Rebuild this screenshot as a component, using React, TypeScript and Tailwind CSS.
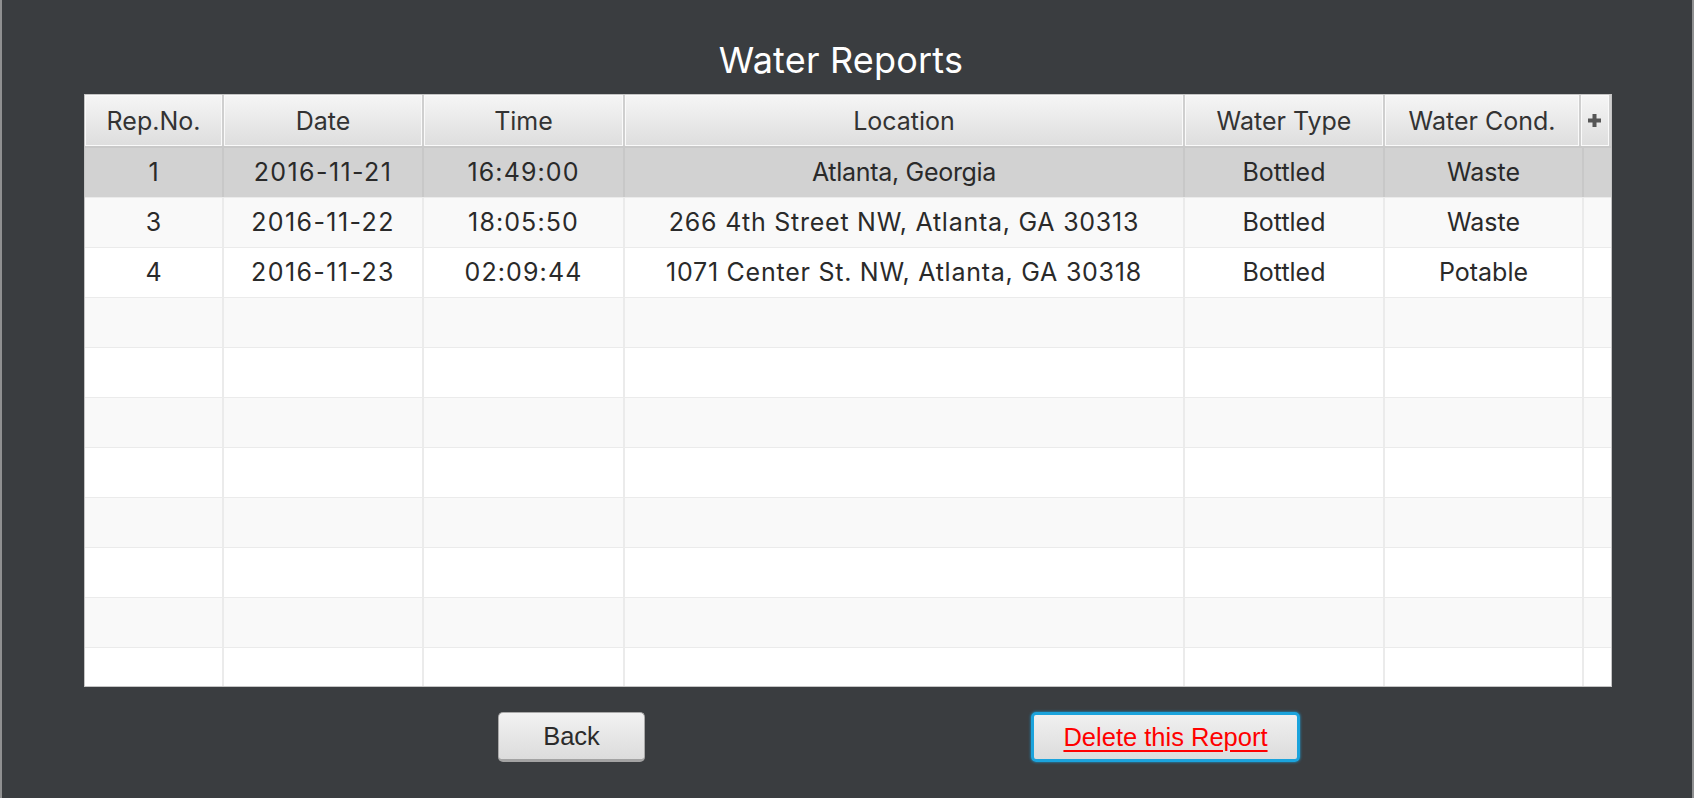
import React from "react";

const cols = [139, 200, 201, 560, 200, 199, 27];
const headerCols = [139, 200, 201, 560, 200, 196, 30];
const headers = ["Rep.No.", "Date", "Time", "Location", "Water Type", "Water Cond."];

type Cell = { t: string; c?: string };

const rows: Cell[][] = [
  [{ t: "1" }, { t: "2016-11-21", c: "tracking-[1.4px]" }, { t: "16:49:00", c: "tracking-[1.1px]" }, { t: "Atlanta, Georgia", c: "tracking-[-0.3px]" }, { t: "Bottled" }, { t: "Waste" }],
  [{ t: "3" }, { t: "2016-11-22", c: "tracking-[1.4px]" }, { t: "18:05:50", c: "tracking-[1.1px]" }, { t: "266 4th Street NW, Atlanta, GA 30313", c: "tracking-[0.75px]" }, { t: "Bottled" }, { t: "Waste" }],
  [{ t: "4" }, { t: "2016-11-23", c: "tracking-[1.4px]" }, { t: "02:09:44", c: "tracking-[1.1px]" }, { t: "1071 Center St. NW, Atlanta, GA 30318", c: "tracking-[0.75px]" }, { t: "Bottled" }, { t: "Potable" }],
];

export default function App() {
  const allRows: Cell[][] = [...rows];
  while (allRows.length < 11) allRows.push([{ t: "" }, { t: "" }, { t: "" }, { t: "" }, { t: "" }, { t: "" }]);
  return (
    <div
      className="w-[1694px] h-[798px] bg-[#3a3d40] overflow-hidden flex flex-col border-l-2 border-l-[#8f9091] border-r-2 border-r-[#8f9091]"
      style={{ fontFamily: "Inter, 'Noto Sans', sans-serif" }}
    >
      <div className="h-[94px] flex items-start justify-center pt-[42px] pr-[12px]">
        <span className="text-white text-[36px] leading-[36px] tracking-[0.2px]">Water Reports</span>
      </div>
      <div className="ml-[82px] w-[1528px] h-[593px] border border-[#c4c4c4] bg-white flex flex-col overflow-hidden">
        <div className="flex h-[53px] border-b-2 border-[#c9c9c9] bg-[#cfcfcf] gap-[2px] shrink-0">
          {headerCols.map((w, i) => (
            <div
              key={i}
              style={{ width: w - 2 }}
              className="h-full shrink-0 bg-gradient-to-b from-[#f5f5f5] to-[#dedede] border border-[#fafafa] flex items-center justify-center pt-[3px] text-[25px] text-[#333333]"
            >
              {i < 6 ? (
                headers[i]
              ) : (
                <svg width="13" height="13" viewBox="0 0 13 13" className="-mt-[4px] -ml-[2px]">
                  <rect x="4.5" y="0" width="4" height="13" fill="#555" />
                  <rect x="0" y="4.5" width="13" height="4" fill="#555" />
                </svg>
              )}
            </div>
          ))}
        </div>
        <div className="flex flex-col">
          {allRows.map((r, ri) => (
            <div
              key={ri}
              className={
                "flex h-[50px] shrink-0 border-b-[1px] border-[#ebebeb] " +
                (ri === 0 ? "bg-[#d2d2d2]" : ri % 2 === 1 ? "bg-[#f9f9f9]" : "bg-white")
              }
            >
              {cols.map((w, ci) => (
                <div
                  key={ci}
                  style={{ width: w }}
                  className={
                    "h-full shrink-0 flex items-center justify-center text-[25px] text-[#2a2a2a] " +
                    (ci < 6 ? "border-r-2 " : "") +
                    (ri === 0 ? "border-[#c8c8c8] " : "border-[#ebebeb] ") +
                    (ci < 6 && r[ci].c ? r[ci].c : "")
                  }
                >
                  {ci < 6 ? r[ci].t : ""}
                </div>
              ))}
            </div>
          ))}
        </div>
      </div>
      <div className="flex items-start mt-[25px]" style={{ fontFamily: "'Liberation Sans', Arial, sans-serif" }}>
        <button className="ml-[496px] w-[147px] h-[50px] rounded-[5px] border border-[#a9a9a9] border-b-[3px] border-b-[#a3a3a3] bg-gradient-to-b from-[#f2f2f2] to-[#dcdcdc] text-[25.5px] text-[#2b2b2b] flex items-center justify-center">
          Back
        </button>
        <button className="ml-[386px] w-[269px] h-[50px] rounded-[5px] border-[3px] border-[#1ba3dc] shadow-[0_0_3px_#1ba3dc] bg-gradient-to-b from-[#f0f0f0] to-[#dcdcdc] text-[25.5px] text-[#ff0000] underline underline-offset-[4px] decoration-[2px] flex items-center justify-center">
          Delete this Report
        </button>
      </div>
    </div>
  );
}
